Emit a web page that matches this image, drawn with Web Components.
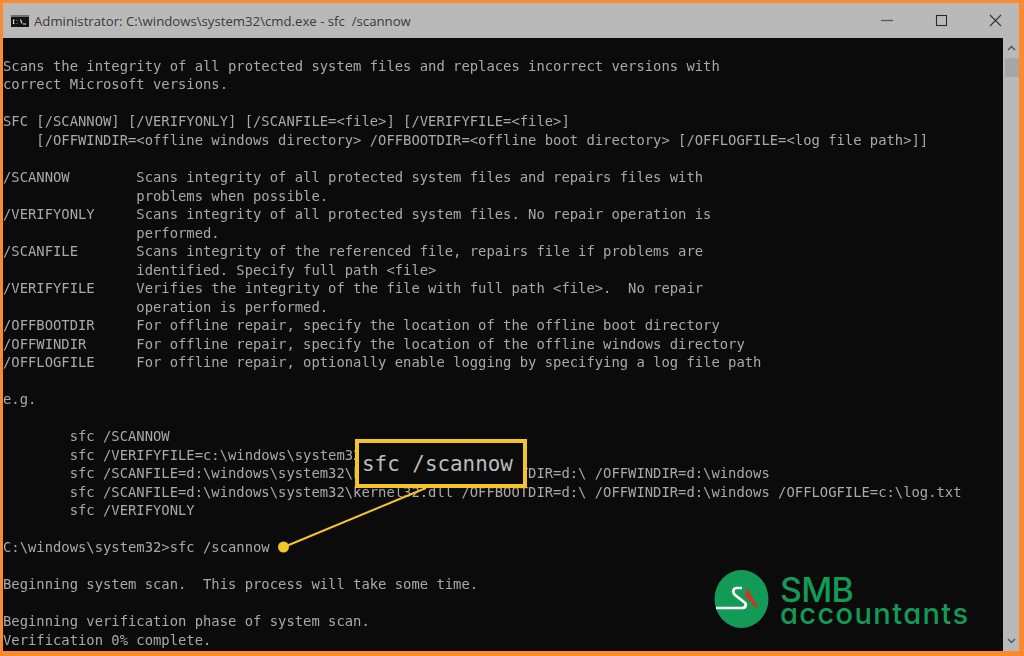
<!DOCTYPE html>
<html lang="en">
<head>
<meta charset="utf-8">
<title>sfc /scannow</title>
<style>
  html, body { margin: 0; height: 100%; background: #fb8a2e; overflow: hidden; }
</style>
</head>
<body>
<cmd-window>
  <win-titlebar slot="title" text="Administrator: C:\windows\system32\cmd.exe - sfc  /scannow"></win-titlebar>
  <console-view><pre>

Scans the integrity of all protected system files and replaces incorrect versions with
correct Microsoft versions.

SFC [/SCANNOW] [/VERIFYONLY] [/SCANFILE=&lt;file&gt;] [/VERIFYFILE=&lt;file&gt;]
    [/OFFWINDIR=&lt;offline windows directory&gt; /OFFBOOTDIR=&lt;offline boot directory&gt; [/OFFLOGFILE=&lt;log file path&gt;]]

/SCANNOW        Scans integrity of all protected system files and repairs files with
                problems when possible.
/VERIFYONLY     Scans integrity of all protected system files. No repair operation is
                performed.
/SCANFILE       Scans integrity of the referenced file, repairs file if problems are
                identified. Specify full path &lt;file&gt;
/VERIFYFILE     Verifies the integrity of the file with full path &lt;file&gt;.  No repair
                operation is performed.
/OFFBOOTDIR     For offline repair, specify the location of the offline boot directory
/OFFWINDIR      For offline repair, specify the location of the offline windows directory
/OFFLOGFILE     For offline repair, optionally enable logging by specifying a log file path

e.g.

        sfc /SCANNOW
        sfc /VERIFYFILE=c:\windows\system32\kernel32.dll
        sfc /SCANFILE=d:\windows\system32\kernel32.dll /OFFBOOTDIR=d:\ /OFFWINDIR=d:\windows
        sfc /SCANFILE=d:\windows\system32\kernel32.dll /OFFBOOTDIR=d:\ /OFFWINDIR=d:\windows /OFFLOGFILE=c:\log.txt
        sfc /VERIFYONLY

C:\windows\system32&gt;sfc /scannow

Beginning system scan.  This process will take some time.

Beginning verification phase of system scan.
Verification 0% complete.</pre></console-view>
  <win-scrollbar></win-scrollbar>
  <zoom-callout text="sfc /scannow"></zoom-callout>
  <smb-logo></smb-logo>
</cmd-window>

<script>
const windowTemplate = document.createElement('template');
windowTemplate.innerHTML = `
  <style>
    :host {
      display: grid;
      grid-template-columns: 1fr 16px;
      grid-template-rows: 35px 1fr;
      position: relative;
      box-sizing: border-box;
      height: 656px;
      padding: 3px 5px 5px 3px;
    }
    ::slotted(win-titlebar) { grid-column: 1 / 3; }
  </style>
  <slot name="title"></slot>
  <slot></slot>
`;

class CmdWindow extends HTMLElement {
  constructor() {
    super();
    this.attachShadow({ mode: 'open' });
    this.shadowRoot.appendChild(windowTemplate.content.cloneNode(true));
  }
}

class WinTitlebar extends HTMLElement {
  constructor() {
    super();
    this.attachShadow({ mode: 'open' });
    this.shadowRoot.innerHTML = `
      <style>
        :host {
          display: flex;
          align-items: center;
          background: #b9b9b9;
          color: #3a3a3a;
          font: 13.2px "Open Sans", "Noto Sans", sans-serif;
          padding-left: 8px;
        }
        .text { margin-left: 5px; white-space: pre; flex: 1; }
        .buttons { display: flex; align-items: center; gap: 41px; padding-right: 17px; }
        svg { display: block; }
      </style>
      <svg width="18" height="12" viewBox="0 0 18 12">
        <rect width="18" height="12" fill="#141414"/>
        <rect width="18" height="2" fill="#6f6f6f"/>
        <path d="M3.5 5H2.5V8.5H3.5M6 5.5V6M6 8V8.5M9.5 4.5L11 8.5M12 9H15" fill="none" stroke="#e4e4e4" stroke-width="1.1"/>
      </svg>
      <span class="text"></span>
      <div class="buttons">
        <svg width="13" height="13" viewBox="0 0 13 13"><path d="M0 6.5H12" stroke="#5c5c5c" stroke-width="1.4"/></svg>
        <svg width="13" height="13" viewBox="0 0 13 13"><rect x="1.5" y="1.5" width="10" height="10" fill="none" stroke="#2b2b2b" stroke-width="1.1"/></svg>
        <svg width="13" height="13" viewBox="0 0 13 13"><path d="M1 1L12 12M12 1L1 12" stroke="#333" stroke-width="1.1"/></svg>
      </div>
    `;
    this.shadowRoot.querySelector('.text').textContent = this.getAttribute('text');
  }
}

class ConsoleView extends HTMLElement {
  constructor() {
    super();
    this.attachShadow({ mode: 'open' });
    this.shadowRoot.innerHTML = `
      <style>
        :host {
          display: block;
          overflow: hidden;
          background: #0b0b0b;
          color: #a9a9a9;
          font-family: "DejaVu Sans Mono", monospace;
          font-size: 13.85px;
          line-height: 18.516px;
        }
        ::slotted(pre) { margin: 0; padding-top: 0.4px; font: inherit; white-space: pre; filter: blur(0.45px); }
      </style>
      <slot></slot>
    `;
  }
}

class WinScrollbar extends HTMLElement {
  constructor() {
    super();
    this.attachShadow({ mode: 'open' });
    this.shadowRoot.innerHTML = `
      <style>
        :host {
          display: flex;
          flex-direction: column;
          align-items: center;
          background: #b9b9b9;
        }
        .arrow { height: 20px; display: flex; align-items: center; justify-content: center; }
        .arrow.down { padding-top: 4px; }
        .thumb { align-self: stretch; height: 19px; background: #a6a6a6; margin-left: 2px; }
        .space { flex: 1; }
      </style>
      <div class="arrow"><svg width="9" height="6" viewBox="0 0 9 6"><path d="M1 5L4.5 1.5L8 5" fill="none" stroke="#555" stroke-width="1.5"/></svg></div>
      <div class="thumb"></div>
      <div class="space"></div>
      <div class="arrow down"><svg width="9" height="6" viewBox="0 0 9 6"><path d="M1 1L4.5 4.5L8 1" fill="none" stroke="#555" stroke-width="1.5"/></svg></div>
    `;
  }
}

// the yellow magnifier box over the console, with its leader line and dot
class ZoomCallout extends HTMLElement {
  constructor() {
    super();
    this.attachShadow({ mode: 'open' });
    this.shadowRoot.innerHTML = `
      <style>
        :host { position: absolute; left: 0; top: 0; width: 0; height: 0; display: block; }
        .box {
          position: absolute;
          left: 355px;
          top: 439px;
          width: 172px;
          height: 49px;
          box-sizing: border-box;
          display: flex;
          align-items: center;
          padding-left: 3px;
          background: #0b0b0b;
          border: 4px solid #f5c528;
          color: #bcbcbc;
          font: 20.9px "DejaVu Sans Mono", monospace;
          white-space: pre;
        }
        svg { position: absolute; left: 0; top: 0; overflow: visible; }
      </style>
      <svg width="1" height="1">
        <path d="M284 547L426 488" stroke="#f5c528" stroke-width="2"/>
        <circle cx="283.5" cy="547" r="5.5" fill="#f5c528"/>
      </svg>
      <div class="box"></div>
    `;
    this.shadowRoot.querySelector('.box').textContent = this.getAttribute('text');
  }
}

class SmbLogo extends HTMLElement {
  constructor() {
    super();
    this.attachShadow({ mode: 'open' });
    this.shadowRoot.innerHTML = `
      <style>
        :host {
          position: absolute;
          left: 714px;
          top: 569px;
          display: flex;
          align-items: flex-start;
          gap: 10px;
          color: #149a57;
          font-family: "Inter", "Lato", sans-serif;
        }
        .words { display: flex; flex-direction: column; padding-top: 8px; }
        .smb { font-size: 34px; font-weight: 500; line-height: 25px; letter-spacing: -0.7px; }
        .acc { font-size: 29px; font-weight: 500; line-height: 24px; letter-spacing: 1.4px; font-feature-settings: "cv11"; }
        svg { display: block; flex: none; }
      </style>
      <svg width="56" height="60" viewBox="0 0 56 60">
        <ellipse cx="27.5" cy="30" rx="27" ry="29" fill="#149a57"/>
        <path d="M2 39H28C32 39 33 35 30 33L21 26C18 23 19 19 23 19H28" fill="none" stroke="#fff" stroke-width="2.7"/>
        <path d="M33 19L44 38L41 38.5L30.5 26Z" fill="#c8372b"/>
      </svg>
      <div class="words"><span class="smb">SMB</span><span class="acc">accountants</span></div>
    `;
  }
}

customElements.define('cmd-window', CmdWindow);
customElements.define('win-titlebar', WinTitlebar);
customElements.define('console-view', ConsoleView);
customElements.define('win-scrollbar', WinScrollbar);
customElements.define('zoom-callout', ZoomCallout);
customElements.define('smb-logo', SmbLogo);
</script>
</body>
</html>
